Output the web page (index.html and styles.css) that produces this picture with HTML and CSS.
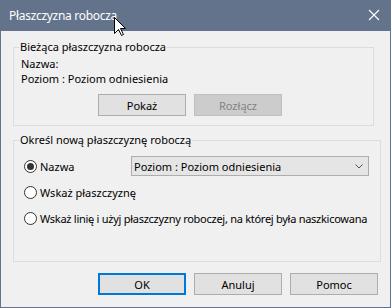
FILE: index.html
```html
<!DOCTYPE html>
<html lang="pl">

<head>
    <meta charset="utf-8">
    <meta name="viewport" content="width=device-width, initial-scale=1.0">
    <title>Płaszczyzna robocza</title>
    <link rel="stylesheet" href="styles.css">
</head>

<body>
    <div class="dialog">
        <div class="titlebar">
            <span class="title">Płaszczyzna robocza</span>
            <svg class="close" width="12" height="12" viewBox="0 0 12 12">
                <path d="M1 1 L11 11 M11 1 L1 11" stroke="#fff" stroke-width="1.1" fill="none" />
            </svg>
        </div>

        <!-- mouse pointer over the title -->
        <svg class="cursor" width="13" height="20" viewBox="0 0 13 20">
            <path d="M0.5 0.5 L0.5 16.5 L4.5 12.5 L7.5 18.5 L9.5 17.5 L6.5 11.5 L11.5 11.5 Z" fill="#fff" stroke="#000" stroke-width="1" />
        </svg>

        <div class="content">
            <fieldset class="group current">
                <legend>Bieżąca płaszczyzna robocza</legend>
                <p>Nazwa:</p>
                <p>Poziom : Poziom odniesienia</p>
                <div class="btns">
                    <button class="btn">Pokaż</button>
                    <button class="btn" disabled>Rozłącz</button>
                </div>
            </fieldset>

            <fieldset class="group new">
                <legend>Określ nową płaszczyznę roboczą</legend>
                <div class="opt first">
                    <span class="radio checked"></span>
                    <span>Nazwa</span>
                    <div class="select">
                        <span>Poziom : Poziom odniesienia</span>
                        <svg width="8" height="5" viewBox="0 0 8 5">
                            <path d="M0.5 0.5 L4 4 L7.5 0.5" stroke="#555" stroke-width="1" fill="none" />
                        </svg>
                    </div>
                </div>
                <div class="opt second">
                    <span class="radio"></span>
                    <span>Wskaż płaszczyznę</span>
                </div>
                <div class="opt third">
                    <span class="radio"></span>
                    <span class="long">Wskaż linię i użyj płaszczyzny roboczej, na której była naszkicowana</span>
                </div>
            </fieldset>

            <div class="footer">
                <button class="btn primary">OK</button>
                <button class="btn">Anuluj</button>
                <button class="btn">Pomoc</button>
            </div>
        </div>
    </div>
</body>

</html>
```

FILE: styles.css
```css
* {
    box-sizing: border-box;
}

body {
    margin: 0;
    font-family: "Noto Sans", sans-serif;
    font-size: 11px;
    color: #000;
}

.dialog {
    position: relative;
    width: 391px;
    height: 308px;
    background: #f0f0f0;
    border: 1px solid #63738b;
    border-top: 0;
}

.titlebar {
    height: 31px;
    margin: 0 -1px;
    background: #63738b;
    color: #fff;
    display: flex;
    align-items: center;
    justify-content: space-between;
    padding: 0 10px 1px 9px;
}

.title {
    font-size: 12px;
    letter-spacing: -0.3px;
}

.close {
    margin-right: 1px;
}

.cursor {
    position: absolute;
    left: 113px;
    top: 17px;
}

.content {
    padding: 9px 0 0 12px;
}

.group {
    margin: 0;
    border: 1px solid #dcdcdc;
    min-width: 0;
    padding: 2px 11px 9px 7px;
    line-height: 15px;
}

.group legend {
    padding: 0 1px;
    margin-left: -2px;
    line-height: 14px;
}

.group p {
    margin: 0;
}

.current {
    width: 361px;
}

.new {
    width: 368px;
    margin-top: 7px;
    padding-top: 0;
    padding-bottom: 35px;
}

.btns {
    display: flex;
    gap: 8px;
    margin: 8px 0 0 77px;
}

.btn {
    width: 88px;
    height: 22px;
    font: inherit;
    color: #000;
    background: #e1e1e1;
    border: 1px solid #adadad;
    padding: 0;
}

.btn:disabled {
    background: #cccccc;
    border-color: #bfbfbf;
    color: #838383;
}

.btn.primary {
    border: 2px solid #0078d7;
}

.opt {
    display: flex;
    align-items: center;
    height: 16px;
    padding-left: 3px;
    white-space: nowrap;
}

.opt.first {
    height: 20px;
    margin-top: 9px;
}

.opt.second {
    margin-top: 8px;
}

.opt.third {
    margin-top: 10px;
}

.long {
    letter-spacing: -0.27px;
}

.radio {
    flex: none;
    width: 13px;
    height: 13px;
    border: 1px solid #333;
    border-radius: 50%;
    background: #fff;
    margin-right: 3px;
    display: flex;
    align-items: center;
    justify-content: center;
}

.radio.checked::after {
    content: "";
    width: 7px;
    height: 7px;
    border-radius: 50%;
    background: #333;
}

.select {
    margin-left: auto;
    width: 238px;
    height: 20px;
    background: #e5e5e5;
    border: 1px solid #adadad;
    display: flex;
    align-items: center;
    justify-content: space-between;
    padding: 0 5px 0 2px;
}

.footer {
    display: flex;
    justify-content: flex-end;
    gap: 8px;
    padding-right: 12px;
    margin-top: 11px;
}
```
